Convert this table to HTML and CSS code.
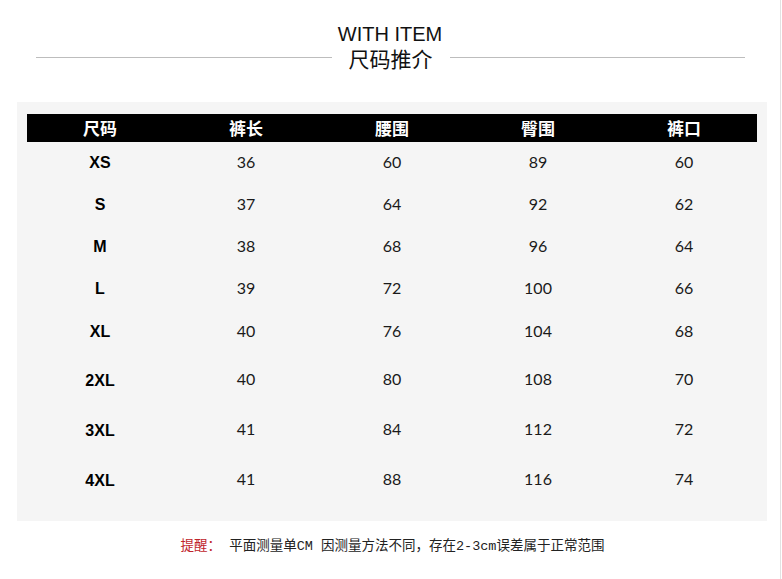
FILE: index.html
```html
<!DOCTYPE html>
<html lang="zh-CN">
<head>
<meta charset="utf-8">
<title>尺码推介</title>
<link rel="stylesheet" href="styles.css">
</head>
<body>
<div class="page">
  <header class="title">
    <div class="title-en">WITH ITEM</div>
    <div class="title-row">
      <span class="rule"></span>
      <span class="title-cn">尺码推介</span>
      <span class="rule"></span>
    </div>
  </header>

  <section class="panel">
    <div class="table">
      <div class="row head">
        <div class="cell">尺码</div><div class="cell">裤长</div><div class="cell">腰围</div><div class="cell">臀围</div><div class="cell">裤口</div>
      </div>
      <div class="row r42"><div class="cell size">XS</div><div class="cell">36</div><div class="cell">60</div><div class="cell">89</div><div class="cell">60</div></div>
      <div class="row r42"><div class="cell size">S</div><div class="cell">37</div><div class="cell">64</div><div class="cell">92</div><div class="cell">62</div></div>
      <div class="row r42"><div class="cell size">M</div><div class="cell">38</div><div class="cell">68</div><div class="cell">96</div><div class="cell">64</div></div>
      <div class="row r42"><div class="cell size">L</div><div class="cell">39</div><div class="cell">72</div><div class="cell">100</div><div class="cell">66</div></div>
      <div class="row r44"><div class="cell size">XL</div><div class="cell">40</div><div class="cell">76</div><div class="cell">104</div><div class="cell">68</div></div>
      <div class="row r50"><div class="cell size">2XL</div><div class="cell">40</div><div class="cell">80</div><div class="cell">108</div><div class="cell">70</div></div>
      <div class="row r50"><div class="cell size">3XL</div><div class="cell">41</div><div class="cell">84</div><div class="cell">112</div><div class="cell">72</div></div>
      <div class="row r50"><div class="cell size">4XL</div><div class="cell">41</div><div class="cell">88</div><div class="cell">116</div><div class="cell">74</div></div>
    </div>
  </section>

  <p class="note"><span class="note-label">提醒：</span>&nbsp;平面测量单CM 因测量方法不同，存在2-3cm误差属于正常范围</p>
</div>
</body>
</html>
```

FILE: styles.css
```css
html, body {
  margin: 0;
  padding: 0;
  background: #ffffff;
}

.page {
  width: 780px;
  min-height: 579px;
  border-right: 1px solid #e2e2e2;
  overflow: hidden;
}

.title {
  padding-top: 24px;
}

.title-en {
  font-family: "Liberation Sans", Arial, sans-serif;
  font-size: 20px;
  line-height: 20px;
  text-align: center;
  color: #111;
}

.title-row {
  display: flex;
  align-items: center;
  gap: 17px;
  padding: 0 35px 0 36px;
  height: 26px;
  margin-top: 1px;
}

.rule {
  flex: 1;
  height: 1px;
  margin-top: -2px;
  background: #bdbdbd;
}

.title-cn {
  font-family: "Noto Sans CJK SC", sans-serif;
  font-size: 21px;
  line-height: 24px;
  color: #111;
}

.panel {
  margin-top: 31px;
  margin-left: 17px;
  width: 730px;
  padding: 12px 10px 17px;
  background: #f5f5f5;
}

.table {
  display: flex;
  flex-direction: column;
}

.row {
  display: grid;
  grid-template-columns: repeat(5, 146px);
  align-items: center;
  text-align: center;
  box-sizing: border-box;
  font-family: "Lato", "Noto Sans", sans-serif;
  font-size: 16px;
  line-height: 20px;
  color: #1a1a1a;
}

.row.head {
  height: 28px;
  background: #000;
  color: #fff;
  font-family: "Noto Sans CJK SC", sans-serif;
  font-weight: 700;
  font-size: 17px;
  line-height: 28px;
}

.r42 { height: 42px; padding-bottom: 3px; }
.r44 { height: 44px; padding-bottom: 3px; }
.r50 { height: 50px; }

.cell.size {
  padding-top: 3px;
  font-family: "Liberation Sans", Arial, sans-serif;
  font-weight: 700;
  font-size: 16px;
  color: #000;
}

.note {
  margin: 17px 0 0;
  text-align: center;
  font-family: "Liberation Mono", "Noto Sans CJK SC", monospace;
  font-size: 13.5px;
  line-height: 18px;
  color: #222;
  padding-left: 5px;
}

.note-label {
  color: #c0242b;
}
```
